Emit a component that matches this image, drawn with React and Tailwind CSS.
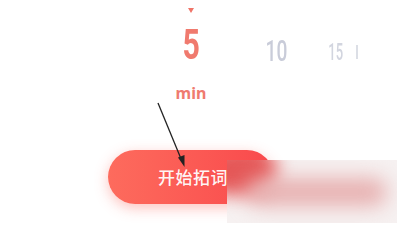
import React from "react";

export default function App() {
  return (
    <div className="relative w-[397px] h-[223px] overflow-hidden bg-white" style={{ fontFamily: '"Noto Sans", "Noto Sans CJK SC", sans-serif' }}>
      <div className="flex flex-col items-start pl-[108px] pt-[8px]">
        <div className="flex items-start">
          <div className="flex flex-col items-center w-[34px] ml-[66px]">
            <div className="w-0 h-0 border-l-[3.5px] border-r-[3.5px] border-t-[5px] border-l-transparent border-r-transparent border-t-[#f07468]" />
            <div className="mt-[12px] text-[42px] leading-[40px] font-bold text-[#f07a6e] scale-x-[0.72]" style={{ fontFamily: 'Roboto, "Liberation Sans", sans-serif' }}>5</div>
            <div className="mt-[18px] text-[16px] leading-[20px] font-bold text-[#ef7b70]">min</div>
          </div>
          <div className="ml-[52px] mt-[29px] text-[29px] leading-[28px] font-medium text-[#c9ccd9] scale-x-[0.66]" style={{ fontFamily: 'Roboto, "Liberation Sans", sans-serif' }}>10</div>
          <div className="ml-[29px] mt-[32px] text-[24px] leading-[24px] font-medium text-[#d2d5df] scale-x-[0.54]" style={{ fontFamily: 'Roboto, "Liberation Sans", sans-serif' }}>15</div>
          <div className="ml-[7px] mt-[37px] w-[1.5px] h-[14px] bg-[#dcdfe6]" />
        </div>
        <div className="mt-[47px] w-[166px] h-[54px] rounded-full bg-gradient-to-r from-[#fd6b5d] to-[#f9484c] shadow-[0_4px_14px_rgba(250,80,70,0.35)] flex items-center justify-center">
          <span className="text-[17px] font-medium text-white/95 tracking-[0.5px] mt-[2px] ml-[4px]">开始拓词</span>
        </div>
      </div>
      <svg className="absolute left-0 top-0" width="397" height="223">
        <line x1="158" y1="103" x2="181.5" y2="160" stroke="#222" strokeWidth="1.3" />
        <polygon points="184.5,167 178,157.5 184.5,155" fill="#222" />
      </svg>
      <div className="absolute left-[227px] top-[160px] w-[170px] h-[63px] bg-[#f6f1f1] overflow-hidden">
        <div className="absolute left-[-25px] top-[-15px] w-[75px] h-[50px] rounded-full bg-[#e55858] blur-[9px]" />
        <div className="absolute left-[20px] top-[18px] w-[140px] h-[28px] rounded-full bg-[#e7b0b0] blur-[10px]" />
      </div>
    </div>
  );
}
